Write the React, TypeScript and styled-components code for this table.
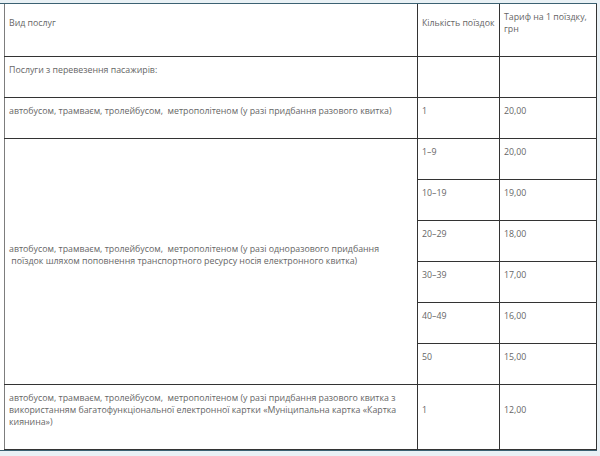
import React from "react";
import styled, { createGlobalStyle } from "styled-components";

const GlobalStyle = createGlobalStyle`
  html, body {
    margin: 0;
    padding: 0;
    background: #e9f1f5;
  }
`;

const Frame = styled.div`
  margin-top: 3px;
  width: 597px;
  height: 448px;
  background: #ffffff;
  border-top: 1px solid #3b6172;
  border-bottom: 1px solid #3b6172;
  padding-left: 4px;
  box-sizing: border-box;
`;

const Table = styled.table`
  border-collapse: collapse;
  table-layout: fixed;
  width: 592px;
  font-family: "Open Sans", "Liberation Sans", sans-serif;
  font-size: 8.8px;
  line-height: 12px;
  color: #666666;
`;

const Col = styled.col<{ $w: number }>`
  width: ${(p) => p.$w}px;
`;

const Cell = styled.td`
  border: 1px solid #333333;
  border-top: 0;
  padding: 7px 4px 7px 4px;
  vertical-align: middle;
  white-space: pre-wrap;

  &:first-child {
    border-left-color: #7d7d7d;
  }
  p {
    margin: 0 0 14px;
  }
`;

const tiers = [
  ["1–9", "20,00"],
  ["10–19", "19,00"],
  ["20–29", "18,00"],
  ["30–39", "17,00"],
  ["40–49", "16,00"],
  ["50", "15,00"],
];

const App: React.FC = () => {
  return (
    <>
      <GlobalStyle />
      <Frame>
        <Table>
          <colgroup>
            <Col $w={413} />
            <Col $w={82} />
            <Col $w={97} />
          </colgroup>
          <tbody>
            <tr>
              <Cell>
                <p>Вид послуг</p>
              </Cell>
              <Cell>
                <p>Кількість поїздок</p>
              </Cell>
              <Cell>
                <p>Тариф на 1 поїздку, грн</p>
              </Cell>
            </tr>
            <tr>
              <Cell>
                <p>Послуги з перевезення пасажирів:</p>
              </Cell>
              <Cell>
                <p>{"\u00a0"}</p>
              </Cell>
              <Cell>
                <p>{"\u00a0"}</p>
              </Cell>
            </tr>
            <tr>
              <Cell>
                <p>автобусом, трамваєм, тролейбусом,  метрополітеном (у разі придбання разового квитка)</p>
              </Cell>
              <Cell>
                <p>1</p>
              </Cell>
              <Cell>
                <p>20,00</p>
              </Cell>
            </tr>
            {tiers.map(([count, price], i) => (
              <tr key={count}>
                {i === 0 && (
                  <Cell rowSpan={tiers.length}>
                    <p>
                      автобусом, трамваєм, тролейбусом,  метрополітеном (у разі одноразового придбання
                      <br /> поїздок шляхом поповнення транспортного ресурсу носія електронного квитка)
                    </p>
                  </Cell>
                )}
                <Cell>
                  <p>{count}</p>
                </Cell>
                <Cell>
                  <p>{price}</p>
                </Cell>
              </tr>
            ))}
            <tr>
              <Cell>
                <p>
                  автобусом, трамваєм, тролейбусом,  метрополітеном (у разі придбання разового квитка з
                  <br />
                  використанням багатофункціональної електронної картки «Муніципальна картка «Картка
                  <br />
                  киянина»)
                </p>
              </Cell>
              <Cell>
                <p>1</p>
              </Cell>
              <Cell>
                <p>12,00</p>
              </Cell>
            </tr>
          </tbody>
        </Table>
      </Frame>
    </>
  );
};

export default App;
